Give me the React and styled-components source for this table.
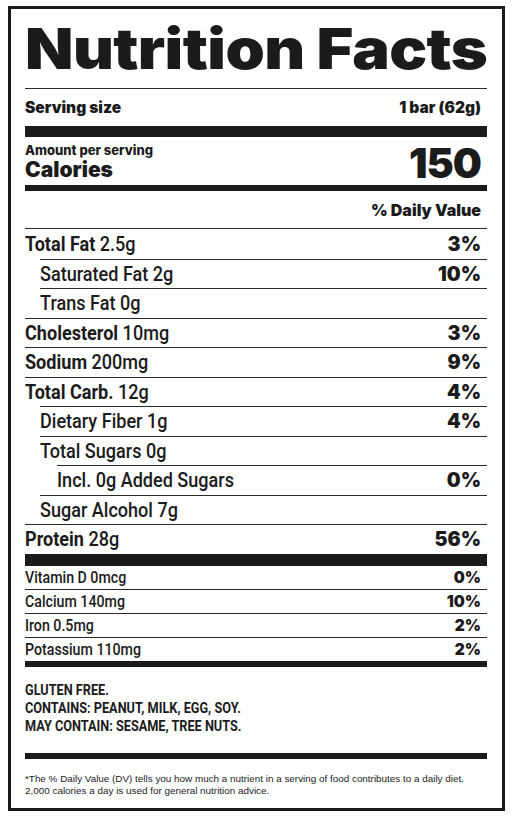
import React from "react";
import styled, { createGlobalStyle } from "styled-components";

const GlobalStyle = createGlobalStyle`
  html, body {
    margin: 0;
    padding: 0;
    background: #ffffff;
  }
  body {
    padding: 6px 11px 0 8px;
  }
`;

const heavy = `"Inter", "Liberation Sans", Arial, sans-serif`;
const narrow = `"Roboto", "Liberation Sans", Arial, sans-serif`;

const Label = styled.div`
  box-sizing: border-box;
  width: 497px;
  height: 805px;
  border: 3px solid #1b1b1b;
  padding: 0 15px 0 14px;
  color: #1b1b1b;
  display: flex;
  flex-direction: column;
`;

const Title = styled.h1`
  margin: 0;
  height: 79px;
  display: flex;
  align-items: center;
  border-bottom: 1px solid #2a2a2a;
  white-space: nowrap;
`;

const TitleText = styled.span`
  display: inline-block;
  font-family: ${heavy};
  font-weight: 900;
  font-size: 56px;
  line-height: 1;
  letter-spacing: -0.5px;
  transform: scaleX(1.125);
  transform-origin: left center;
`;

const HeavyRow = styled.div`
  display: flex;
  justify-content: space-between;
  align-items: center;
  height: ${p => p.$h}px;
  padding-right: 6px;
  font-family: ${heavy};
  font-weight: 900;
  font-size: ${p => p.$size}px;
  white-space: nowrap;
`;

const Bar = styled.div`
  height: ${p => p.$h}px;
  background: #1b1b1b;
`;

const CalBlock = styled.div`
  height: 48px;
  display: flex;
  justify-content: space-between;
  align-items: flex-end;
  padding-right: 6px;
  padding-bottom: 3px;
  box-sizing: border-box;
  font-family: ${heavy};
  font-weight: 900;
`;

const CalLeft = styled.div`
  display: flex;
  flex-direction: column;
`;

const Amount = styled.span`
  font-size: 13px;
  line-height: 15px;
  font-weight: 800;
`;

const CalWord = styled.span`
  font-size: 21px;
  line-height: 24px;
`;

const CalNum = styled.span`
  font-size: 41px;
  line-height: 38px;
  letter-spacing: -1px;
`;

const DvHead = styled.div`
  height: 37px;
  display: flex;
  justify-content: flex-end;
  align-items: center;
  padding-right: 6px;
  font-family: ${heavy};
  font-weight: 900;
  font-size: 16px;
  border-bottom: 1px solid #2a2a2a;
`;

const Row = styled.div`
  display: flex;
  justify-content: space-between;
  align-items: center;
  box-sizing: border-box;
  height: ${p => p.$h}px;
  margin-left: ${p => p.$indent || 0}px;
  padding-right: 6px;
  border-top: ${p => (p.$line ? "1px solid #2a2a2a" : "none")};
  white-space: nowrap;
`;

const Name = styled.span`
  display: inline-block;
  font-family: ${narrow};
  font-size: ${p => p.$size}px;
  font-weight: 500;
  color: #1b1b1b;
  transform: scaleX(${p => p.$scale});
  transform-origin: left center;
`;

const Strong = styled.b`
  font-weight: 700;
`;

const Pct = styled.span`
  font-family: ${heavy};
  font-weight: 900;
  font-size: ${p => p.$size}px;
`;

const Allergens = styled.div`
  height: 86px;
  box-sizing: border-box;
  padding-top: 14px;
  display: flex;
  flex-direction: column;
  align-items: flex-start;
`;

const AllergenLine = styled.span`
  display: inline-block;
  font-family: ${narrow};
  font-weight: 700;
  font-size: 15.3px;
  line-height: 18px;
  white-space: nowrap;
  transform: scaleX(0.83);
  transform-origin: left center;
`;

const Footnote = styled.p`
  margin: 0;
  padding-top: 14px;
  font-family: "Liberation Sans", Arial, sans-serif;
  font-size: 9.9px;
  line-height: 12.5px;
  color: #222;
`;

const nutrients = [
  { name: "Total Fat", amt: "2.5g", pct: "3%", bold: true },
  { name: "Saturated Fat 2g", pct: "10%", indent: 15 },
  { name: "Trans Fat 0g", indent: 15 },
  { name: "Cholesterol", amt: "10mg", pct: "3%", bold: true },
  { name: "Sodium", amt: "200mg", pct: "9%", bold: true },
  { name: "Total Carb.", amt: "12g", pct: "4%", bold: true },
  { name: "Dietary Fiber 1g", pct: "4%", indent: 15 },
  { name: "Total Sugars 0g", indent: 15 },
  { name: "Incl. 0g Added Sugars", pct: "0%", indent: 32 },
  { name: "Sugar Alcohol 7g", indent: 15 },
  { name: "Protein", amt: "28g", pct: "56%", bold: true },
];

const vitamins = [
  { name: "Vitamin D 0mcg", pct: "0%" },
  { name: "Calcium 140mg", pct: "10%" },
  { name: "Iron 0.5mg", pct: "2%" },
  { name: "Potassium 110mg", pct: "2%" },
];

const allergens = [
  "GLUTEN FREE.",
  "CONTAINS: PEANUT, MILK, EGG, SOY.",
  "MAY CONTAIN: SESAME, TREE NUTS.",
];

const App = () => {
  return (
    <>
      <GlobalStyle />
      <Label>
        <Title>
          <TitleText>Nutrition Facts</TitleText>
        </Title>
        <HeavyRow $h={37} $size={15.5}>
          <span>Serving size</span>
          <span>1 bar (62g)</span>
        </HeavyRow>
        <Bar $h={11} />
        <CalBlock>
          <CalLeft>
            <Amount>Amount per serving</Amount>
            <CalWord>Calories</CalWord>
          </CalLeft>
          <CalNum>150</CalNum>
        </CalBlock>
        <Bar $h={6} />
        <DvHead>% Daily Value</DvHead>
        {nutrients.map((n, i) => (
          <Row key={n.name} $h={29.5} $indent={n.indent} $line={i > 0}>
            <Name $size={21} $scale={0.86}>
              {n.bold ? (
                <>
                  <Strong>{n.name}</Strong> {n.amt}
                </>
              ) : (
                n.name
              )}
            </Name>
            {n.pct && <Pct $size={19.5}>{n.pct}</Pct>}
          </Row>
        ))}
        <Bar $h={12} />
        {vitamins.map((v, i) => (
          <Row key={v.name} $h={i === 0 ? 23 : 24} $line={i > 0}>
            <Name $size={16.5} $scale={0.86}>{v.name}</Name>
            <Pct $size={15.5}>{v.pct}</Pct>
          </Row>
        ))}
        <Bar $h={6} />
        <Allergens>
          {allergens.map(a => (
            <AllergenLine key={a}>{a}</AllergenLine>
          ))}
        </Allergens>
        <Bar $h={6} />
        <Footnote>
          *The % Daily Value (DV) tells you how much a nutrient in a serving of food contributes to a daily diet.
          <br />
          2,000 calories a day is used for general nutrition advice.
        </Footnote>
      </Label>
    </>
  );
};

export default App;
